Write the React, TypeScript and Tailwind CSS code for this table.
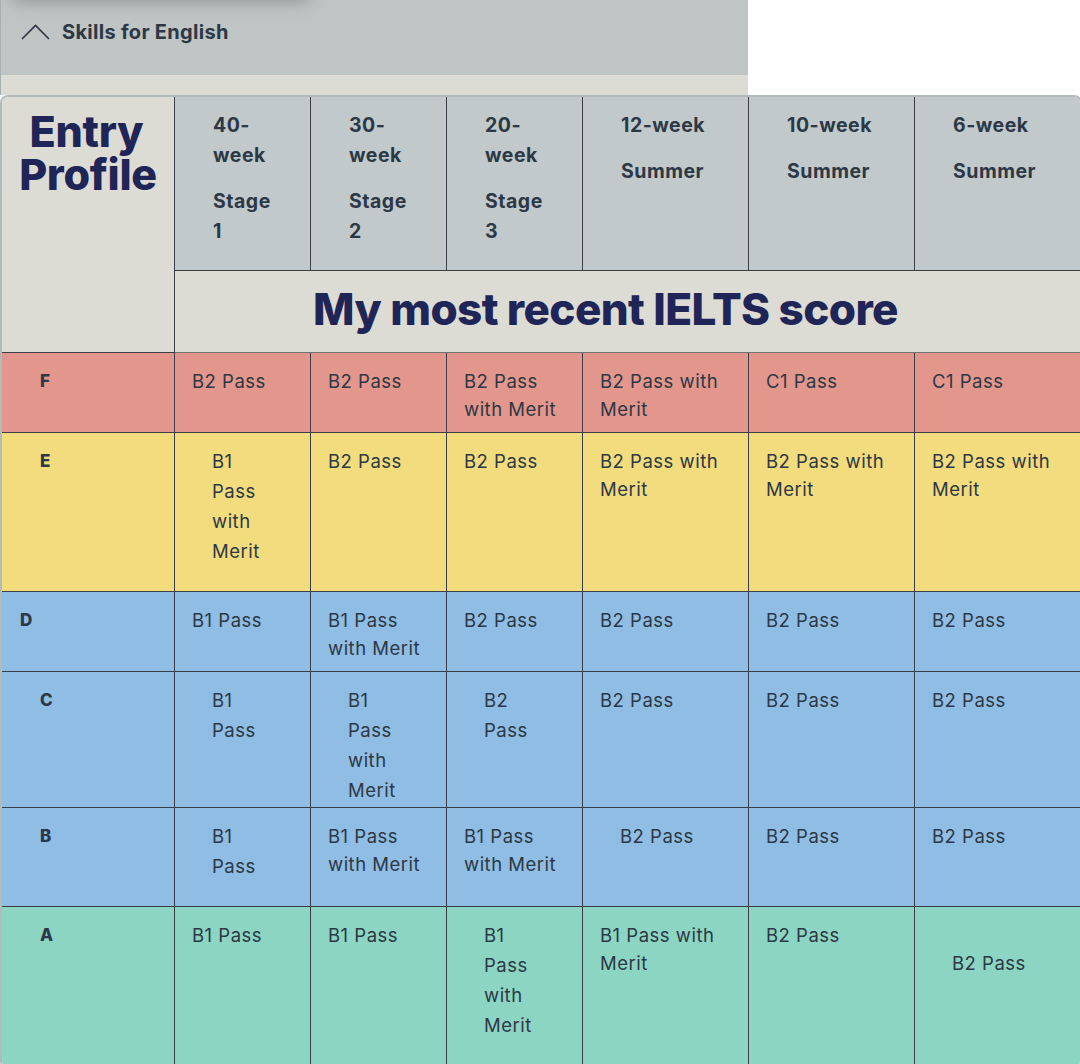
import React from "react";

type Cell = { lines: string[]; wide?: boolean; extra?: string };
type Row = { label: string; labelPad: string; bg: string; h: string; cells: Cell[] };

const c = (lines: string[], wide = false, extra = ""): Cell => ({ lines, wide, extra });

const rows: Row[] = [
  {
    label: "F",
    labelPad: "pl-[38px]",
    bg: "bg-[#e3968c]",
    h: "h-[80px]",
    cells: [
      c(["B2 Pass"]),
      c(["B2 Pass"]),
      c(["B2 Pass", "with Merit"]),
      c(["B2 Pass with", "Merit"]),
      c(["C1 Pass"]),
      c(["C1 Pass"]),
    ],
  },
  {
    label: "E",
    labelPad: "pl-[38px]",
    bg: "bg-[#f3dc7d]",
    h: "h-[159px]",
    cells: [
      c(["B1", "Pass", "with", "Merit"], true),
      c(["B2 Pass"]),
      c(["B2 Pass"]),
      c(["B2 Pass with", "Merit"]),
      c(["B2 Pass with", "Merit"]),
      c(["B2 Pass with", "Merit"]),
    ],
  },
  {
    label: "D",
    labelPad: "pl-[18px]",
    bg: "bg-[#90bde4]",
    h: "h-[80px]",
    cells: [
      c(["B1 Pass"]),
      c(["B1 Pass", "with Merit"]),
      c(["B2 Pass"]),
      c(["B2 Pass"]),
      c(["B2 Pass"]),
      c(["B2 Pass"]),
    ],
  },
  {
    label: "C",
    labelPad: "pl-[38px]",
    bg: "bg-[#90bde4]",
    h: "h-[136px]",
    cells: [
      c(["B1", "Pass"], true),
      c(["B1", "Pass", "with", "Merit"], true),
      c(["B2", "Pass"], true),
      c(["B2 Pass"]),
      c(["B2 Pass"]),
      c(["B2 Pass"]),
    ],
  },
  {
    label: "B",
    labelPad: "pl-[38px]",
    bg: "bg-[#90bde4]",
    h: "h-[99px]",
    cells: [
      c(["B1", "Pass"], true),
      c(["B1 Pass", "with Merit"]),
      c(["B1 Pass", "with Merit"]),
      c(["B2 Pass"], true),
      c(["B2 Pass"]),
      c(["B2 Pass"]),
    ],
  },
  {
    label: "A",
    labelPad: "pl-[38px]",
    bg: "bg-[#8dd5c3]",
    h: "h-[160px]",
    cells: [
      c(["B1 Pass"]),
      c(["B1 Pass"]),
      c(["B1", "Pass", "with", "Merit"], true),
      c(["B1 Pass with", "Merit"]),
      c(["B2 Pass"]),
      c(["B2 Pass"], true, "pt-[41px]"),
    ],
  },
];

const headers: string[][] = [
  ["40-", "week"],
  ["30-", "week"],
  ["20-", "week"],
  ["12-week"],
  ["10-week"],
  ["6-week"],
];
const headers2: string[][] = [
  ["Stage", "1"],
  ["Stage", "2"],
  ["Stage", "3"],
  ["Summer"],
  ["Summer"],
  ["Summer"],
];

const font = { fontFamily: "Inter, 'Noto Sans', sans-serif" };

export default function App() {
  return (
    <div className="w-[1080px] h-[1064px] overflow-hidden bg-white text-[#2c3845]" style={font}>
      {/* top accordion */}
      <div className="w-[748px] border-l border-[#a9b0b0]">
        <div className="relative h-[75px] bg-[#bfc5c5] flex items-center pl-[20px] gap-[12px] overflow-hidden">
          <div className="absolute -top-[14px] left-[10px] w-[300px] h-[16px] rounded-full bg-[#8f9696] blur-[8px]" />
          <svg width="29" height="16" viewBox="0 0 29 16" fill="none" className="mt-[-12px]">
            <polyline points="1,15 14.5,1.5 28,15" stroke="#2c3845" strokeWidth="1.6" />
          </svg>
          <span className="text-[20px] font-bold tracking-[0.3px] text-[#2c3845] mt-[-11px]">Skills for English</span>
        </div>
        <div className="h-[20px] bg-[#dcdcd5]" />
      </div>

      {/* table */}
      <div className="w-[1082px] border-2 border-[#b3baba] rounded-[8px] overflow-hidden">
        <div className="grid grid-cols-[173px_136px_136px_136px_166px_166px_165px]">
          {/* Entry profile */}
          <div className="row-span-2 bg-[#dcdcd5] border-r border-b border-[#3a3f47] flex flex-col items-center pt-[13px] text-[#1f2556] font-extrabold text-[43px] leading-[43px] tracking-[-0.3px]">
            <div className="pr-[3px]">Entry</div>
            <div>Profile</div>
          </div>
          {headers.map((h, i) => (
            <div
              key={i}
              className={`h-[174px] bg-[#c1c9cb] border-b border-[#3a3f47] ${i < 5 ? "border-r" : ""} pl-[38px] pt-[13px] font-bold text-[19.5px] tracking-[0.5px] leading-[30px]`}
            >
              <div>
                {h.map((l, j) => (
                  <div key={j}>{l}</div>
                ))}
              </div>
              <div className="mt-[16px]">
                {headers2[i].map((l, j) => (
                  <div key={j}>{l}</div>
                ))}
              </div>
            </div>
          ))}
          <div className="col-span-6 h-[82px] bg-[#dcdcd5] border-b border-[#6f7474] flex items-center justify-center pr-[44px]">
            <span className="text-[#1f2556] font-extrabold text-[44px] tracking-[-0.6px] mt-[-6px]">
              My most recent IELTS score
            </span>
          </div>

          {rows.map((r, ri) => (
            <React.Fragment key={ri}>
              <div
                className={`${r.h} ${r.bg} border-r ${ri < rows.length - 1 ? "border-b" : ""} border-[#3a3f47] ${r.labelPad} pt-[14px] font-extrabold text-[17px] leading-[28px]`}
              >
                {r.label}
              </div>
              {r.cells.map((cell, ci) => (
                <div
                  key={ci}
                  className={`${r.h} ${r.bg} ${ci < 5 ? "border-r" : ""} ${ri < rows.length - 1 ? "border-b" : ""} border-[#3a3f47] text-[18.5px] tracking-[0.5px] ${
                    cell.wide ? "pl-[37px] leading-[30px] pt-[13px]" : "pl-[17px] leading-[28px] pt-[14px]"
                  } ${cell.extra ?? ""}`}
                >
                  {cell.lines.map((l, li) => (
                    <div key={li} className="whitespace-nowrap">
                      {l}
                    </div>
                  ))}
                </div>
              ))}
            </React.Fragment>
          ))}
        </div>
      </div>
    </div>
  );
}
